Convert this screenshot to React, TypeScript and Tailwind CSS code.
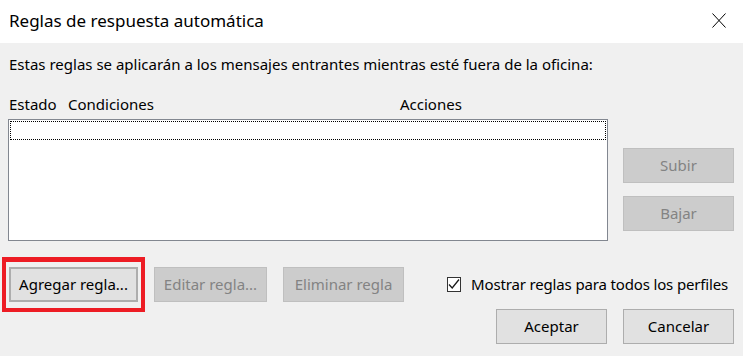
import React from "react";

function Btn({ children, disabled, className = "" }: { children: React.ReactNode; disabled?: boolean; className?: string }) {
  return (
    <div
      className={
        "flex items-center justify-center h-[35px] border text-[15px] leading-none " +
        (disabled
          ? "bg-[#cccccc] border-[#bfbfbf] text-[#838383] "
          : "bg-[#e1e1e1] border-[#adadad] text-black ") +
        className
      }
    >
      {children}
    </div>
  );
}

export default function App() {
  return (
    <div className="w-[743px] h-[356px] bg-[#f0f0f0] overflow-hidden font-['Noto_Sans',sans-serif] text-black">
      <div className="h-[43px] bg-white flex items-center justify-between pl-[9px] pr-[17px]">
        <span className="text-[17px] leading-none pb-[2px]">Reglas de respuesta automática</span>
        <svg width="14" height="15" viewBox="0 0 14 15" className="mt-[-2px]">
          <path d="M0.5 0.5 L13.5 14.5 M13.5 0.5 L0.5 14.5" stroke="#000" strokeWidth="1" fill="none" />
        </svg>
      </div>

      <div className="pl-[9px] pr-[9px]">
        <p className="mt-[11px] text-[15px] leading-[20px]">
          Estas reglas se aplicarán a los mensajes entrantes mientras esté fuera de la oficina:
        </p>
        <div className="mt-[20px] flex text-[15px] leading-[20px]">
          <span className="w-[59px]">Estado</span>
          <span className="w-[332px]">Condiciones</span>
          <span>Acciones</span>
        </div>

        <div className="mt-[5px] flex ml-[-1px]">
          <div className="w-[600px] h-[122px] bg-white border border-[#828790] p-[1px]">
            <div className="h-[19px] border border-dotted border-black" />
          </div>
          <div className="ml-[15px] mt-[29px] flex flex-col gap-[13px]">
            <Btn disabled className="w-[111px]">Subir</Btn>
            <Btn disabled className="w-[111px]">Bajar</Btn>
          </div>
        </div>

        <div className="mt-[26px] flex items-center">
          <div className="relative">
            <div className="absolute left-[-7px] right-[-7px] top-[-10px] bottom-[-10px] border-[4px] border-t-[5px] border-[#ed1c24]" />
            <Btn className="w-[129px] border-[2px] border-[#0078d7]">Agregar regla...</Btn>
          </div>
          <Btn disabled className="w-[113px] ml-[16px]">Editar regla...</Btn>
          <Btn disabled className="w-[121px] ml-[16px]">Eliminar regla</Btn>
          <div className="ml-[43px] flex items-center">
            <div className="w-[14px] h-[15px] border border-[#333333] bg-white flex items-center justify-center">
              <svg width="12" height="13" viewBox="0 0 12 13">
                <path d="M1 6.5 L4.2 10 L11 1.5" stroke="#1a1a1a" strokeWidth="1.3" fill="none" />
              </svg>
            </div>
            <span className="ml-[10px] text-[15px] leading-[20px] mb-[1px] tracking-[-0.15px]">Mostrar reglas para todos los perfiles</span>
          </div>
        </div>

        <div className="mt-[7px] flex justify-end gap-[16px] pr-[0px]">
          <Btn className="w-[111px] h-[34px]">Aceptar</Btn>
          <Btn className="w-[111px] h-[34px]">Cancelar</Btn>
        </div>
      </div>
    </div>
  );
}
